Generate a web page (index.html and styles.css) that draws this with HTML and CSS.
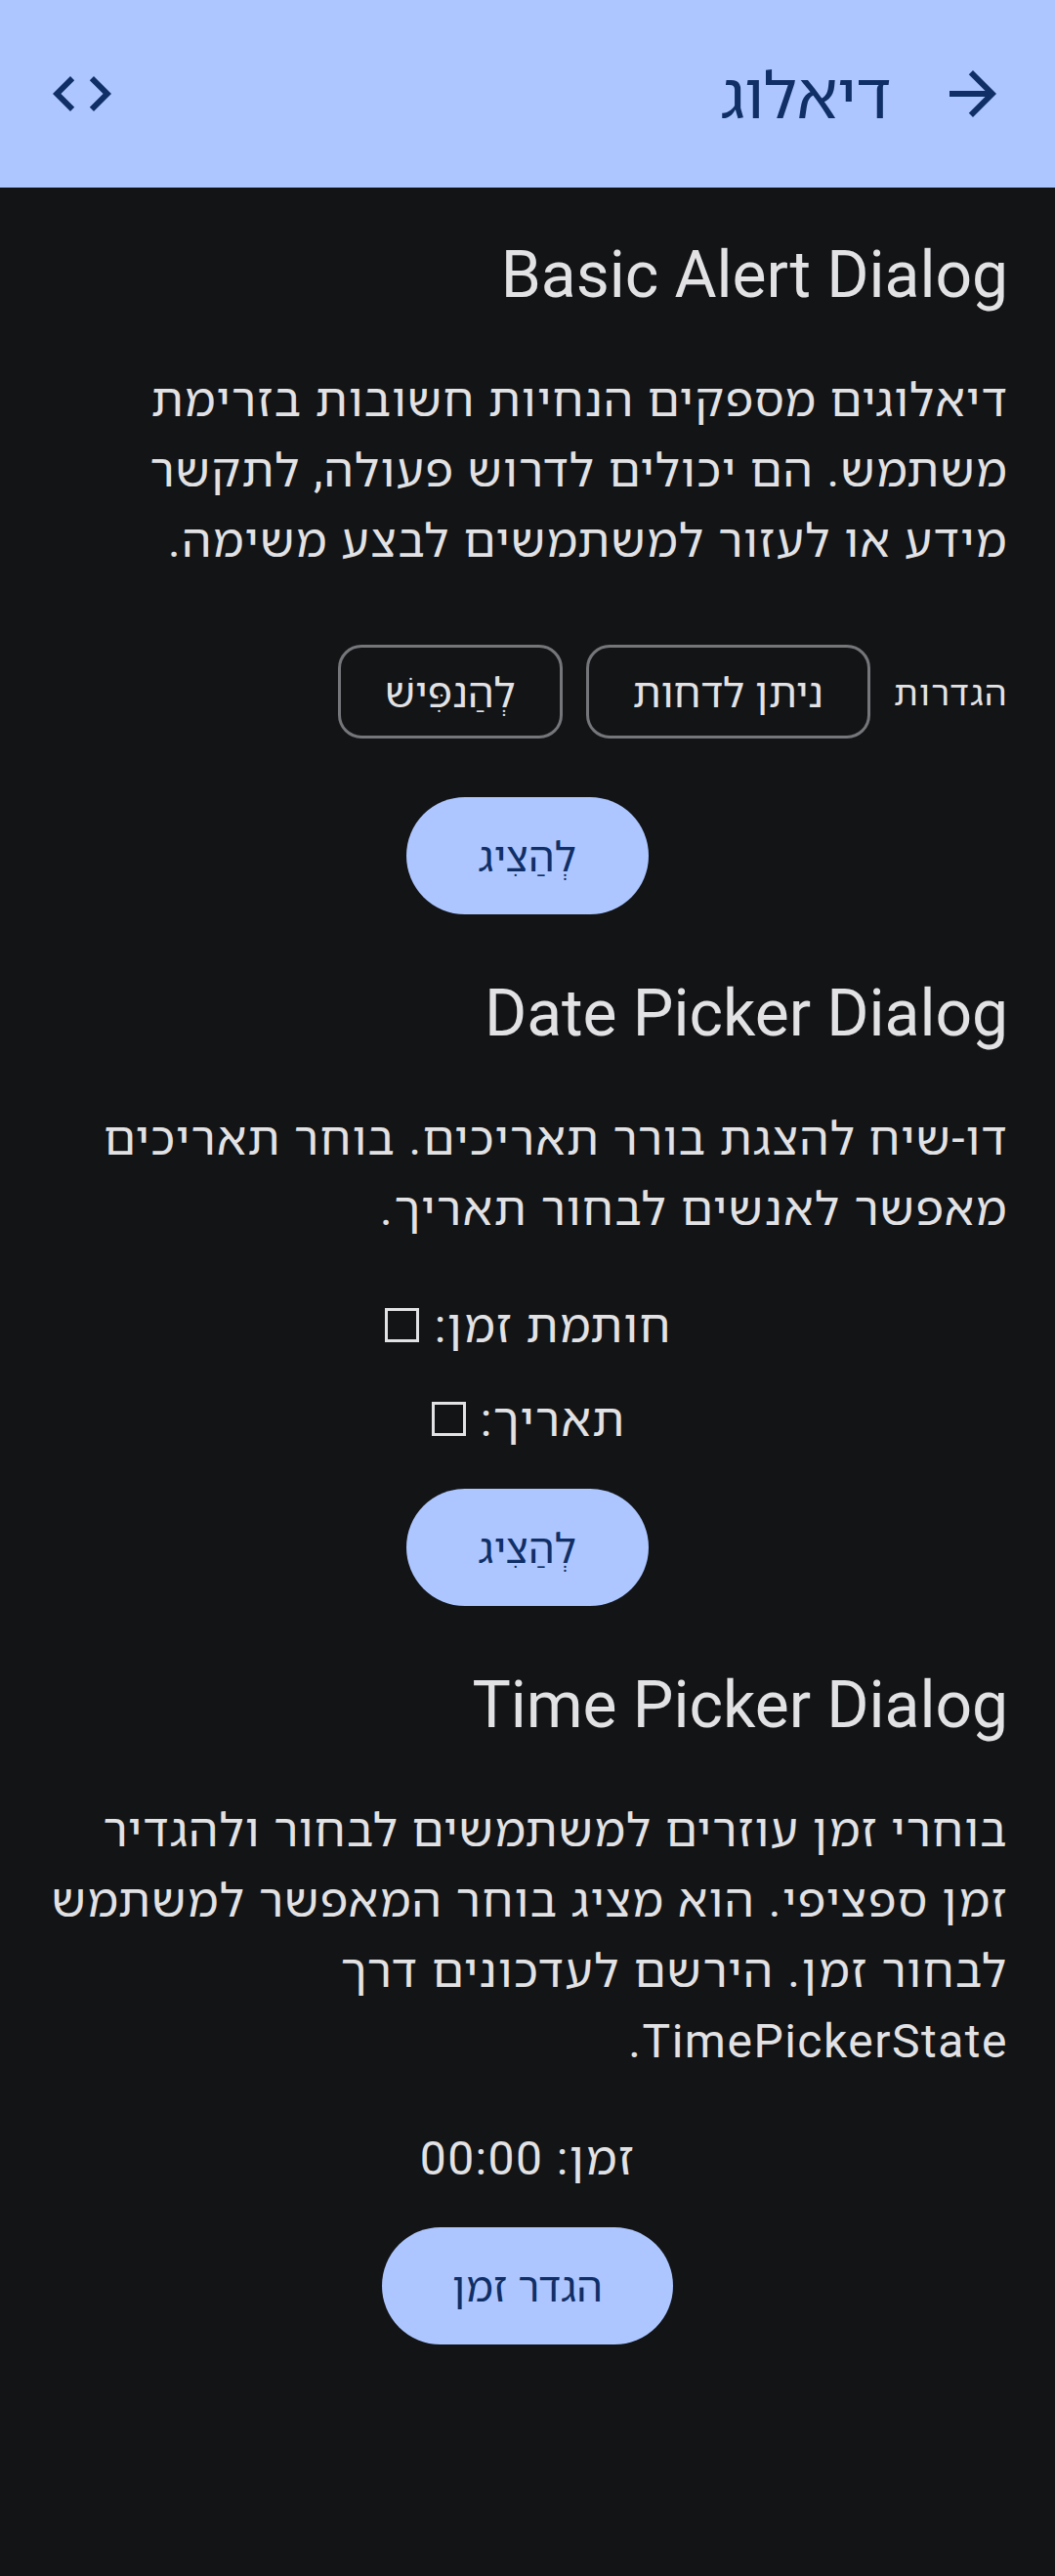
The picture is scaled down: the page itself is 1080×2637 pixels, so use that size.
FILE: index.html
```html
<!DOCTYPE html>
<html lang="he" dir="rtl">
<head>
<meta charset="utf-8">
<title>דיאלוג</title>
<link rel="stylesheet" href="styles.css">
</head>
<body>
<header class="app-bar">
  <svg class="icon" viewBox="0 0 24 24"><path d="M12 4l-1.41 1.41L16.17 11H4v2h12.17l-5.58 5.59L12 20l8-8z"/></svg>
  <h1 class="app-title">דיאלוג</h1>
  <svg class="icon" viewBox="0 0 24 24"><path d="M9.4 16.6L4.8 12l4.6-4.6L8 6l-6 6 6 6 1.4-1.4zm5.2 0l4.6-4.6-4.6-4.6L16 6l6 6-6 6-1.4-1.4z"/></svg>
</header>
<main class="content">
  <section class="section">
    <h2 class="title">Basic Alert Dialog</h2>
    <p class="body"><span class="tight">דיאלוגים מספקים הנחיות חשובות בזרימת</span><br><span class="tight">משתמש. הם יכולים לדרוש פעולה, לתקשר</span><br>מידע או לעזור למשתמשים לבצע משימה.</p>
    <div class="settings">
      <span class="settings-label">הגדרות</span>
      <span class="chip">ניתן לדחות</span>
      <span class="chip">לְהַנפִּישׁ</span>
    </div>
    <button class="button">לְהַצִיג</button>
  </section>
  <section class="section">
    <h2 class="title">Date Picker Dialog</h2>
    <p class="body"><span class="tight">דו-שיח להצגת בורר תאריכים. בוחר תאריכים</span><br><span class="loose">מאפשר לאנשים לבחור תאריך.</span></p>
    <div class="values">
      <div class="value">חותמת זמן: <span class="box"></span></div>
      <div class="value">תאריך: <span class="box"></span></div>
    </div>
    <button class="button">לְהַצִיג</button>
  </section>
  <section class="section">
    <h2 class="title">Time Picker Dialog</h2>
    <p class="body"><span class="tight">בוחרי זמן עוזרים למשתמשים לבחור ולהגדיר</span><br>זמן ספציפי. הוא מציג בוחר המאפשר למשתמש<br><span class="loose">לבחור זמן. הירשם לעדכונים דרך</span><br>TimePickerState.</p>
    <div class="values">
      <div class="value">זמן: 00:00</div>
    </div>
    <button class="button">הגדר זמן</button>
  </section>
</main>
</body>
</html>
```
FILE: styles.css
```css
* { box-sizing: border-box; }
body {
  margin: 0;
  min-height: 2637px;
  background: #121416;
  color: #e2e2e5;
  font-family: Roboto, "Noto Sans Hebrew", "Open Sans", sans-serif;
  font-weight: 400;
}
h1, h2, p { margin: 0; font-weight: 400; }
.app-bar {
  display: flex;
  align-items: center;
  gap: 48px;
  height: 192px;
  padding: 0 48px;
  background: #adc6ff;
  color: #102f67;
}
.app-title { flex: 1; padding-top: 6px; font-size: 66px; line-height: 84px; letter-spacing: -0.2px; }
.icon { width: 72px; height: 72px; fill: currentColor; }
.content { display: flex; flex-direction: column; gap: 60px; padding: 48px; }
.section { display: flex; flex-direction: column; }
.title { font-size: 66px; line-height: 84px; letter-spacing: -0.05px; }
.body {
  margin-top: 48px;
  margin-bottom: -2px;
  padding-top: 2px;
  font-size: 48px;
  line-height: 72px;
  letter-spacing: 1.5px;
  white-space: nowrap;
}
.tight { letter-spacing: 1.35px; }
.loose { letter-spacing: 1.64px; }
.settings { display: flex; align-items: center; gap: 24px; margin-top: 72px; }
.settings-label {
  padding-top: 3px;
  font-size: 36px;
  line-height: 48px;
  letter-spacing: 1.4px;
}
.chip {
  height: 96px;
  padding: 2px 45px 0;
  border: 3px solid #75767a;
  border-radius: 24px;
  font-size: 42px;
  line-height: 90px;
  letter-spacing: 0.15px;
}
.values {
  display: flex;
  flex-direction: column;
  align-items: center;
  gap: 24px;
  margin-top: 48px;
}
.value {
  height: 72px;
  padding-top: 2px;
  font-size: 48px;
  line-height: 72px;
  letter-spacing: 1.4px;
}
.box {
  display: inline-block;
  width: 35px;
  height: 35px;
  margin: 0 2px;
  border: 3px solid currentColor;
}
.button {
  align-self: center;
  min-width: 248px;
  height: 120px;
  margin-top: 60px;
  padding: 3px 72px 0;
  border: 0;
  border-radius: 60px;
  background: #adc6ff;
  color: #102f67;
  font: inherit;
  font-size: 42px;
  line-height: 60px;
  letter-spacing: 0.4px;
}
.values + .button { margin-top: 36px; }
```
